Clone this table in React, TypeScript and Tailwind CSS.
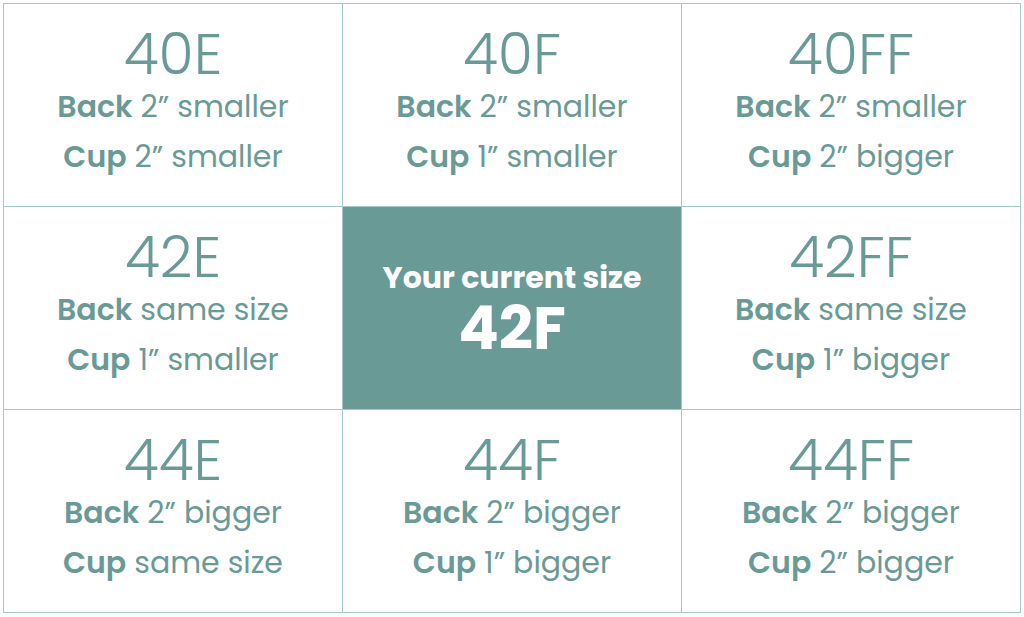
import React from "react";

type Cell = { size: string; back: string; cup: string } | null;

const cells: Cell[] = [
  { size: "40E", back: "2” smaller", cup: "2” smaller" },
  { size: "40F", back: "2” smaller", cup: "1” smaller" },
  { size: "40FF", back: "2” smaller", cup: "2” bigger" },
  { size: "42E", back: "same size", cup: "1” smaller" },
  null,
  { size: "42FF", back: "same size", cup: "1” bigger" },
  { size: "44E", back: "2” bigger", cup: "same size" },
  { size: "44F", back: "2” bigger", cup: "1” bigger" },
  { size: "44FF", back: "2” bigger", cup: "2” bigger" },
];

export default function App() {
  return (
    <div
      className="w-[1024px] h-[617px] bg-white pt-[3px] pl-[3px]"
      style={{ fontFamily: "Poppins, Inter, 'Noto Sans', sans-serif" }}
    >
      <div className="w-[1018px] h-[610px] grid grid-cols-3 grid-rows-3 border-t border-l border-[#a3ccc8]">
        {cells.map((c, i) =>
          c ? (
            <div
              key={i}
              className="border-r border-b border-[#a3ccc8] flex flex-col items-center pt-[22px] text-[#6a9a96]"
            >
              <div className="text-[57px] leading-[56px] font-light">{c.size}</div>
              <div className="text-[30px] leading-[50px] font-normal">
                <span className="font-semibold">Back</span> {c.back}
              </div>
              <div className="text-[30px] leading-[50px] font-normal">
                <span className="font-semibold">Cup</span> {c.cup}
              </div>
            </div>
          ) : (
            <div
              key={i}
              className="border-r border-b border-[#a3ccc8] bg-[#6a9a96] flex flex-col items-center justify-center text-white"
            >
              <div className="text-[30px] leading-[40px] font-bold">Your current size</div>
              <div className="text-[60px] leading-[60px] font-bold">42F</div>
            </div>
          )
        )}
      </div>
    </div>
  );
}
